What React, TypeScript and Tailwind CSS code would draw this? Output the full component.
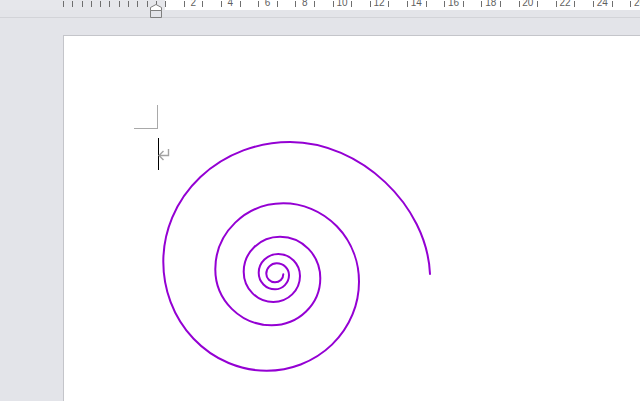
const spiralPoints: [number, number][] = [
  [430, 274], [290, 142], [163.3, 261.7], [266.7, 370.7], [359, 281.7],
  [283.3, 203.3], [215.3, 269.3], [271.7, 325.3], [320.3, 278.3],
  [280, 236.7], [243.7, 271.7], [273.3, 302], [300, 276],
  [278.3, 254], [258.7, 272.7], [275, 289.3], [289, 275],
  [276.7, 263.3], [266.3, 273.7], [275, 282.3], [283.3, 274.3],
];

// The spiral is made of quarter ellipses between its extreme points.
function spiralPath(): string {
  let d = `M 430 274 C 427 205 360 142 290 142`;
  for (let i = 2; i < spiralPoints.length; i++) {
    const [x0, y0] = spiralPoints[i - 1];
    const [x1, y1] = spiralPoints[i];
    d += ` A ${Math.abs(x1 - x0).toFixed(1)} ${Math.abs(y1 - y0).toFixed(1)} 0 0 0 ${x1} ${y1}`;
  }
  return d;
}

const leftTicks = Array.from({ length: 11 });
const labels = ["2", "4", "6", "8", "10", "12", "14", "16", "18", "20", "22", "24", "26"];

function Ruler() {
  return (
    <div className="flex h-[10px] overflow-hidden text-[10px] leading-none text-[#5f5f5f]">
      <div className="flex w-[165px] shrink-0 bg-[#e6e7eb] pl-[63px] pt-[1px]">
        {leftTicks.map((_, i) => (
          <div key={i} className="h-[6px] w-[9.3px] shrink-0 border-l border-[#6f6f6f]" />
        ))}
      </div>
      <div className="flex flex-1 bg-white pt-[1px]">
        <div className="h-[6px] w-[18.9px] shrink-0 border-l border-[#6f6f6f]" />
        {labels.map((label) => (
          <div key={label} className="flex w-[37.2px] shrink-0">
            <div className="h-[6px] w-[18.6px] shrink-0 border-l border-[#6f6f6f] text-center">
              <span className="relative -top-[3px] block -translate-x-[0.5px]">{label}</span>
            </div>
            <div className="h-[6px] w-[18.6px] shrink-0 border-l border-[#6f6f6f]" />
          </div>
        ))}
      </div>
    </div>
  );
}

export default function App() {
  return (
    <div
      className="relative flex h-[401px] w-[640px] flex-col overflow-hidden bg-[#e3e4e9]"
      style={{ fontFamily: '"Liberation Sans", Arial, sans-serif' }}
    >
      <Ruler />
      <div className="h-[8px] border-b border-[#d2d3d8]" />
      <div className="flex flex-1 pt-[17px]">
        <div className="w-[63px] shrink-0" />
        <div className="flex-1 border-l border-t border-[#c4c5ca] bg-white pl-[70px] pt-[69px]">
          <div className="h-[24px] w-[24px] border-b border-r border-[#a9a9a9]" />
          <div className="ml-[24px] mt-[9px] flex">
            <div className="h-[32px] w-[1px] bg-black" />
            <svg width="13" height="14" viewBox="0 0 13 14" fill="none" className="-ml-[1px] mt-[10px]" stroke="#a3a3a3" strokeWidth="1.4">
              <path d="M10.5 1 V7.5 H1 M5.5 3 L1 7.5 L5.5 12" />
            </svg>
          </div>
        </div>
      </div>

      <svg width="13" height="14" viewBox="0 0 13 14" fill="none" className="absolute left-[150px] top-[4px]" stroke="#7f7f7f" strokeWidth="1">
        <path d="M0.5 6.5 V3.5 L6 0.5 L11.5 3.5 V6.5 Z" fill="#ffffff" />
        <path d="M0.5 13.5 V6.5 H11.5 V13.5 Z" fill="#e3e4e9" />
      </svg>

      <svg width="640" height="401" viewBox="0 0 640 401" fill="none" className="absolute left-0 top-0">
        <path d={spiralPath()} stroke="#9400d3" strokeWidth="2" strokeLinecap="round" />
      </svg>
    </div>
  );
}
